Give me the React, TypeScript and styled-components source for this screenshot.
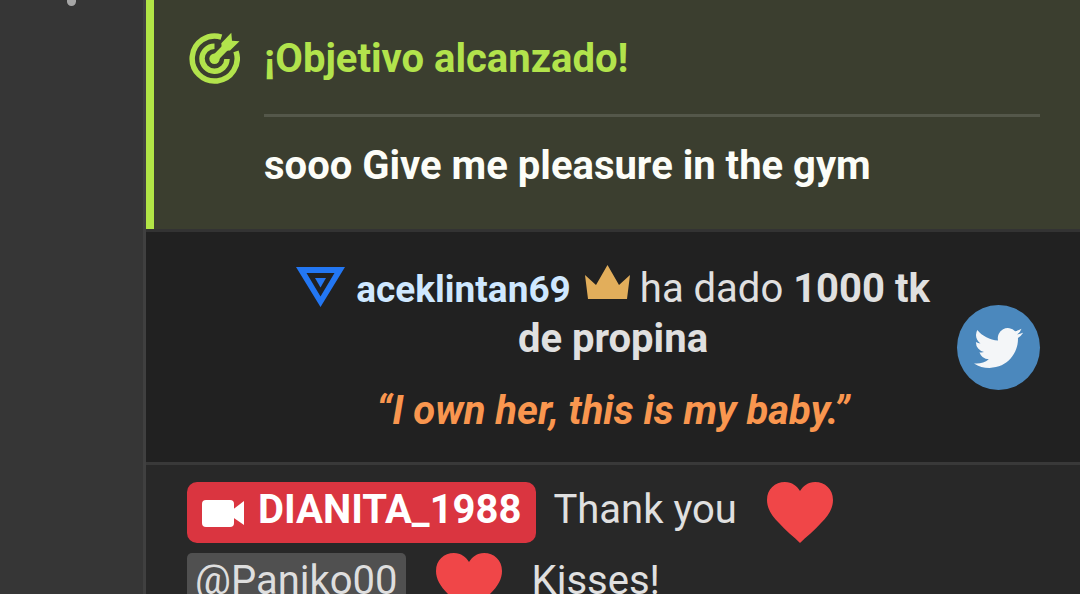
import React from "react";
import styled, { createGlobalStyle } from "styled-components";

const GlobalStyle = createGlobalStyle`
  * { box-sizing: border-box; }
  body { margin: 0; background: #282828; font-family: Roboto, "Liberation Sans", sans-serif; }
`;

const Page = styled.div`
  display: flex;
  height: 100vh;
  overflow: hidden;
  color: #e0e0e0;
  font-size: 40px;
  line-height: 50px;
`;

const Gutter = styled.aside`
  display: flex;
  justify-content: center;
  align-items: flex-start;
  flex: 0 0 146px;
  background: #363636;
  border-right: 3px solid #404040;
`;

const ScrollDot = styled.span`
  width: 9px;
  height: 6px;
  border-radius: 0 0 5px 5px;
  background: #a6a6a6;
`;

const Chat = styled.main`
  flex: 1;
  min-width: 0;
  background: #282828;
`;

const Goal = styled.section`
  display: flex;
  align-items: flex-start;
  gap: 24px;
  padding: 32px 40px 38px 35px;
  border-left: 8px solid #b2e546;
  background: #3b3e2f;
`;

const GoalIcon = styled.svg`
  flex: none;
  width: 51px;
  height: 52px;
`;

const GoalBody = styled.div`
  flex: 1;
  min-width: 0;
`;

const GoalTitle = styled.h2`
  margin: 0;
  padding: 2px 0 30px;
  border-bottom: 3px solid #54574a;
  color: #b2e34c;
  font-size: inherit;
  font-weight: 700;
`;

const GoalText = styled.p`
  margin: 24px 0 0;
  color: #fcfdf8;
  font-weight: 700;
`;

const Tip = styled.section`
  position: relative;
  padding: 32px 130px 26px;
  border-top: 3px solid #333333;
  border-bottom: 3px solid #393939;
  background: #212121;
  text-align: center;
`;

const TipText = styled.p`
  margin: 0;
`;

const RankIcon = styled.svg`
  width: 49px;
  height: 40px;
  margin-right: 11px;
  vertical-align: -5px;
`;

const CrownIcon = styled.svg`
  width: 45px;
  height: 35px;
  margin-right: 10px;
  vertical-align: 2px;
`;

const UserName = styled.a`
  margin-right: 14px;
  color: #cfe8ff;
  font-size: 37px;
  line-height: 1;
  font-weight: 700;
  text-decoration: none;
`;

const Quote = styled.p`
  margin: 22px 0 0;
  color: #f9964f;
  font-style: italic;
  font-weight: 700;
`;

const ShareButton = styled.button`
  position: absolute;
  top: 73px;
  right: 40px;
  display: grid;
  place-items: center;
  width: 83px;
  height: 85px;
  padding: 0;
  border: 0;
  border-radius: 50%;
  background: #4b88bd;
`;

const Message = styled.div`
  padding: 17px 40px 0 41px;
  line-height: 56px;
`;

const Line = styled.div`
  display: flex;
  align-items: flex-start;
  height: 61px;
  margin-bottom: 10px;
`;

const ModelBadge = styled.a`
  display: flex;
  align-items: center;
  gap: 14px;
  margin-right: 17px;
  padding: 0 15px 5px;
  border-radius: 10px;
  background: #da3540;
  color: #ffffff;
  font-weight: 700;
  text-decoration: none;
`;

const CameraIcon = styled.svg`
  width: 42px;
  height: 28px;
  margin-top: 6px;
`;

const Mention = styled.a`
  margin-right: 30px;
  padding: 0 8px 5px;
  border-radius: 5px;
  background: #505050;
  color: #dedede;
  text-decoration: none;
`;

const HeartIcon = styled.svg`
  flex: none;
  width: 66px;
  height: 61px;
  margin-right: 30px;
`;

const Words = styled.span`
  margin-right: 30px;
`;

const Heart = () => (
  <HeartIcon viewBox="0 0 66 61" role="img" aria-label="heart">
    <path
      fill="#f04648"
      d="M33 61C27 55 18 48 12 41C4 33 0 26 0 18C0 7 8 0 18 0C25 0 30 4 33 9C36 4 41 0 48 0C58 0 66 7 66 18C66 26 62 33 54 41C48 48 39 55 33 61Z"
    />
  </HeartIcon>
);

export default function App() {
  return (
    <>
      <GlobalStyle />
      <Page>
        <Gutter>
          <ScrollDot />
        </Gutter>
        <Chat>
          <Goal>
            <GoalIcon viewBox="0 0 51 52" aria-hidden="true">
              <g fill="none" stroke="#b2e34c">
                <path strokeWidth="5.5" d="M32.4 5.1A22.5 22.5 0 1 0 47 19.4" />
                <path strokeWidth="5.5" d="M25.5 14.2A12.5 12.5 0 1 0 38 27" />
                <path strokeWidth="7" d="M25.5 26.8L38 14" />
              </g>
              <circle cx="25.5" cy="26.8" r="5.2" fill="#b2e34c" />
              <path fill="#b2e34c" d="M32.3 11.3L42.3 0.7L43 8.7L50.5 9.3L41 18.5L33 19Z" />
            </GoalIcon>
            <GoalBody>
              <GoalTitle>¡Objetivo alcanzado!</GoalTitle>
              <GoalText>sooo Give me pleasure in the gym</GoalText>
            </GoalBody>
          </Goal>

          <Tip>
            <TipText>
              <RankIcon viewBox="0 0 49 40" aria-hidden="true">
                <path fill="#2377f3" fillRule="evenodd" d="M0 0H49L24.5 40ZM10.5 6L24.5 29.5L38.5 6Z" />
                <path fill="#2377f3" d="M19 11H30L24.5 20.5Z" />
              </RankIcon>
              <UserName href="#aceklintan69">aceklintan69</UserName>
              <CrownIcon viewBox="0 0 45 35" aria-hidden="true">
                <path fill="#e2ae5b" d="M0 10L11 20L22.5 0L34 20L45 10L42 34H3Z" />
              </CrownIcon>
              ha dado <b>1000 tk de propina</b>
            </TipText>
            <Quote>“I own her, this is my baby.”</Quote>
            <ShareButton type="button" aria-label="Twitter">
              <svg width="49" height="40" viewBox="0 2.2 24 19.6" aria-hidden="true">
                <path
                  fill="#f4f6f8"
                  d="M23.95 4.57a10 10 0 0 1-2.82.77 4.96 4.96 0 0 0 2.16-2.72c-.95.55-2 .96-3.13 1.18a4.92 4.92 0 0 0-8.38 4.48C7.69 8.1 4.07 6.13 1.64 3.16a4.82 4.82 0 0 0-.67 2.48c0 1.71.87 3.21 2.19 4.1a4.9 4.9 0 0 1-2.23-.62v.06a4.92 4.92 0 0 0 3.95 4.83 5 5 0 0 1-2.21.08 4.94 4.94 0 0 0 4.6 3.42A9.87 9.87 0 0 1 0 19.54a13.99 13.99 0 0 0 7.56 2.21c9.05 0 13.99-7.5 13.99-13.98 0-.21 0-.42-.02-.63a9.94 9.94 0 0 0 2.46-2.55z"
                />
              </svg>
            </ShareButton>
          </Tip>

          <Message>
            <Line>
              <ModelBadge href="#DIANITA_1988">
                <CameraIcon viewBox="0 0 42 28" aria-hidden="true">
                  <rect width="32" height="27" y="1" rx="4" fill="#fff" />
                  <path fill="#fff" d="M29 12L42 2V26L29 17Z" />
                </CameraIcon>
                DIANITA_1988
              </ModelBadge>
              <Words>Thank you</Words>
              <Heart />
            </Line>
            <Line>
              <Mention href="#Paniko00">@Paniko00</Mention>
              <Heart />
              <Words>Kisses!</Words>
            </Line>
          </Message>
        </Chat>
      </Page>
    </>
  );
}
